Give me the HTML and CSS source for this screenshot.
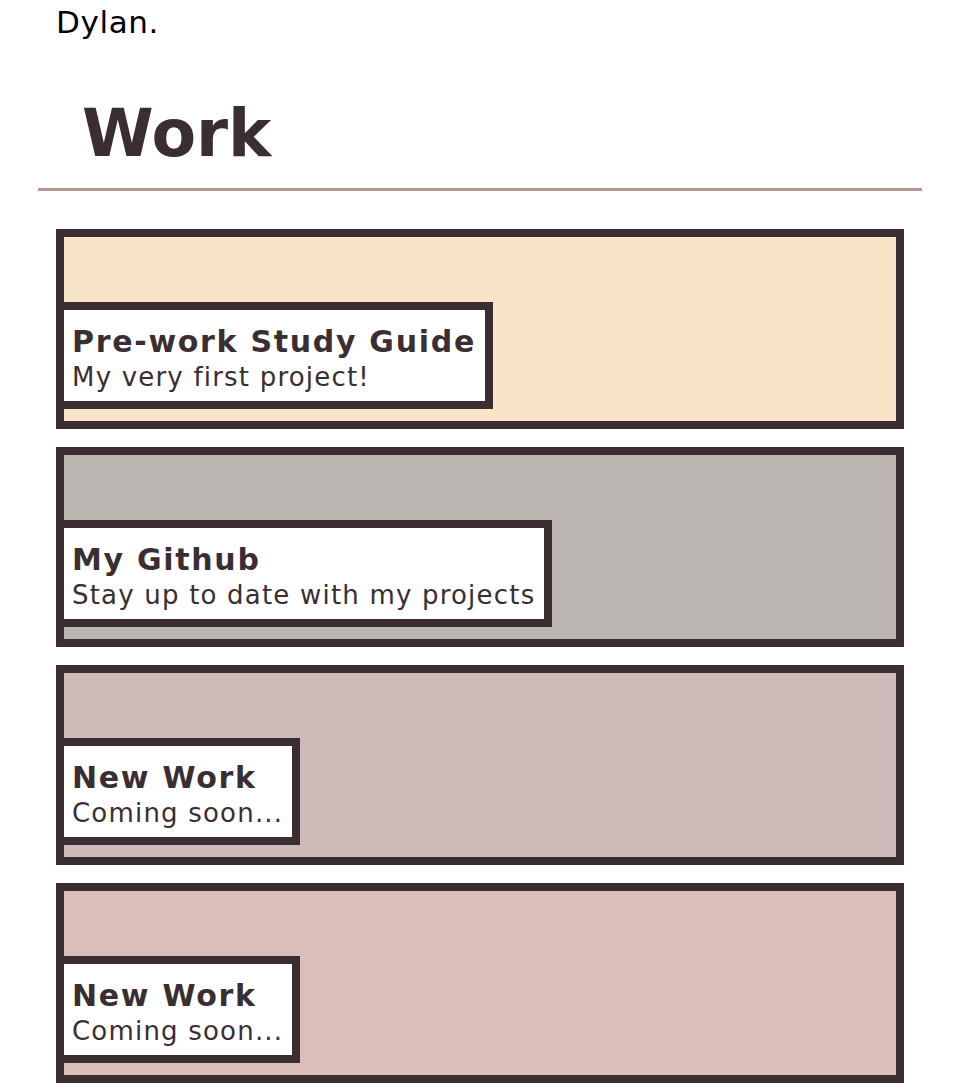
FILE: index.html
```html
<!DOCTYPE html>
<html lang="en">
<head>
    <meta charset="UTF-8">
    <meta name="viewport" content="width=device-width, initial-scale=1.0">
    <title>Dylan - Work</title>
    <link rel="stylesheet" href="styles.css">
</head>
<body>

<p class="intro">Dylan.</p>

<section class="work">
    <h2 class="section-title">Work</h2>

    <div class="projects">
        <a href="#" class="project project-guide">
            <div class="project-label">
                <h3>Pre-work Study Guide</h3>
                <p>My very first project!</p>
            </div>
        </a>
        <a href="#" class="project project-github">
            <div class="project-label">
                <h3>My Github</h3>
                <p>Stay up to date with my projects</p>
            </div>
        </a>
        <a href="#" class="project project-new">
            <div class="project-label">
                <h3>New Work</h3>
                <p>Coming soon...</p>
            </div>
        </a>
        <a href="#" class="project project-new-2">
            <div class="project-label">
                <h3>New Work</h3>
                <p>Coming soon...</p>
            </div>
        </a>
    </div>
</section>

</body>
</html>
```

FILE: styles.css
```css
body {
    font-family: "DejaVu Sans", Verdana, sans-serif;
    margin: 0;
    padding: 0;
    background-color: white;
    color: #3a2e33;
}
.intro {
    margin: 0;
    padding: 4px 0 0 56px;
    font-size: 31px;
    line-height: 36px;
    letter-spacing: 0.6px;
    color: black;
}
.work {
    margin: 0 34px 0 38px;
}
.section-title {
    margin: 0;
    padding: 55px 0 15px 44px;
    font-size: 65px;
    line-height: 1.2;
    border-bottom: 3px solid #b8948e;
}
.projects {
    display: flex;
    flex-direction: column;
    gap: 18px;
    padding: 38px 18px 0 18px;
}
.project {
    display: flex;
    align-items: flex-end;
    height: 200px;
    box-sizing: border-box;
    border: 8px solid #3a2e33;
    padding-bottom: 12px;
    color: #3a2e33;
    text-decoration: none;
}
.project-guide {
    background-color: #f8e4c6;
}
.project-github {
    background-color: #bbb5b2;
}
.project-new {
    background-color: #cdbbb9;
}
.project-new-2 {
    background-color: #dbbdb9;
}
.project-label {
    margin-left: -8px;
    background-color: white;
    border: 8px solid #3a2e33;
    padding: 15px 9px 6px 8px;
}
.project-label h3 {
    margin: 0;
    font-size: 30px;
    line-height: 34px;
    letter-spacing: 1.7px;
}
.project-label p {
    margin: 0;
    font-size: 26px;
    line-height: 36px;
    letter-spacing: 1.2px;
}
```
